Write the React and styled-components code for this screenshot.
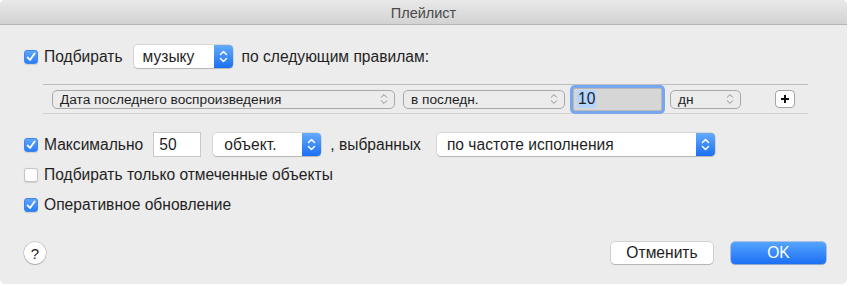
import React from "react";
import styled, { createGlobalStyle } from "styled-components";

const Global = createGlobalStyle`
  html, body { margin: 0; padding: 0; background: #ffffff; }
  body { font-family: "Liberation Sans", Arial, sans-serif; }
  * { box-sizing: border-box; }
`;

const Window = styled.div`
  width: 847px;
  height: 284px;
  background: #ececec;
  border-radius: 5px;
  overflow: hidden;
  display: flex;
  flex-direction: column;
  color: #1f1f1f;
`;

const TitleBar = styled.div`
  height: 25px;
  flex: none;
  display: flex;
  align-items: center;
  justify-content: center;
  background: linear-gradient(#e9e9e9, #d2d2d2);
  border-bottom: 1px solid #b4b4b4;
  font-size: 14.5px;
  color: #4a4a4a;
  padding-top: 1px;
`;

const Body = styled.div`
  flex: 1;
  display: flex;
  flex-direction: column;
  padding: 20px 0 0 24px;
`;

const Row = styled.div`
  display: flex;
  align-items: center;
  height: ${(p) => p.h || 23}px;
  margin-top: ${(p) => p.mt || 0}px;
  font-size: 15.6px;
`;

const Label = styled.span`
  margin-left: ${(p) => p.ml || 0}px;
  white-space: nowrap;
`;

const Box = styled.span`
  width: 14px;
  height: 14px;
  border-radius: 3px;
  flex: none;
  display: inline-flex;
  align-items: center;
  justify-content: center;
  background: ${(p) => (p.on ? "linear-gradient(#5fa6fb, #2a7ef6)" : "#ffffff")};
  border: 1px solid ${(p) => (p.on ? "#3c86ec" : "#c4c4c4")};
  box-shadow: 0 0.5px 1px rgba(0,0,0,0.12);
`;

const Checkbox = ({ on }) => (
  <Box on={on ? 1 : 0}>
    {on && (
      <svg width="10" height="10" viewBox="0 0 10 10">
        <path d="M1.6 5.4 L4 8 L8.6 1.4" fill="none" stroke="#fff" strokeWidth="1.8" strokeLinecap="round" strokeLinejoin="round" />
      </svg>
    )}
  </Box>
);

const Popup = styled.div`
  width: ${(p) => p.w}px;
  height: 23px;
  margin-left: ${(p) => p.ml || 0}px;
  display: flex;
  background: #fff;
  border-radius: 4px;
  box-shadow: 0 0 0 0.5px rgba(0,0,0,0.18), 0 1px 1px rgba(0,0,0,0.15);
  overflow: hidden;
  flex: none;
`;

const PopupText = styled.div`
  flex: 1;
  display: flex;
  align-items: center;
  padding-left: ${(p) => p.pl || 10}px;
`;

const BlueStep = styled.div`
  width: 19px;
  background: linear-gradient(#64abfc, #1b6ff4);
  display: flex;
  align-items: center;
  justify-content: center;
`;

const Chevrons = ({ color = "#fff", w = 9, h = 13, sw = 1.5 }) => (
  <svg width={w} height={h} viewBox="0 0 9 13">
    <path d="M1.5 4.5 L4.5 1.5 L7.5 4.5 M1.5 8.5 L4.5 11.5 L7.5 8.5" fill="none" stroke={color} strokeWidth={sw} strokeLinecap="round" strokeLinejoin="round" />
  </svg>
);

const BigPopup = ({ w, ml, children, pl }) => (
  <Popup w={w} ml={ml}>
    <PopupText pl={pl}>{children}</PopupText>
    <BlueStep>
      <Chevrons />
    </BlueStep>
  </Popup>
);

const RuleBox = styled.div`
  margin-top: 16px;
  margin-left: 19px;
  width: 765px;
  height: 30px;
  border-top: 1px solid #bdbdbd;
  border-bottom: 1px solid #d2d2d2;
  display: flex;
  align-items: center;
  padding-left: 9px;
`;

const SmallPopup = styled.div`
  width: ${(p) => p.w}px;
  height: 19px;
  margin-left: ${(p) => p.ml || 0}px;
  border: 1px solid #a8a8a8;
  border-radius: 5px;
  background: #ececec;
  display: flex;
  align-items: center;
  justify-content: space-between;
  padding: 0 6px 0 7px;
  flex: none;
  font-size: 13.7px;
`;

const FocusField = styled.div`
  width: 89px;
  height: 23px;
  margin-left: 8px;
  background: #d6d6d6;
  border: 1px solid #b8b8b8;
  box-shadow: 0 0 0 3px #78a6ef;
  border-radius: 2px;
  display: flex;
  align-items: center;
  padding-left: 3px;
  font-size: 15.6px;
  flex: none;
`;

const Selected = styled.span`
  background: #b4d5fe;
  padding: 0 1px;
`;

const PlusButton = styled.div`
  width: 20px;
  height: 18px;
  margin-left: 34px;
  background: #fff;
  border: 1px solid #a5a5a5;
  border-radius: 4px;
  display: flex;
  align-items: center;
  justify-content: center;
  flex: none;
`;

const NumField = styled.div`
  width: 48px;
  height: 25px;
  margin-left: 10px;
  background: #fff;
  border: 1px solid #c9c9c9;
  display: flex;
  align-items: center;
  padding-left: 5px;
  flex: none;
`;

const Footer = styled.div`
  margin-top: auto;
  margin-bottom: 20px;
  display: flex;
  align-items: center;
`;

const HelpButton = styled.div`
  width: 22px;
  height: 22px;
  border-radius: 50%;
  background: #fff;
  box-shadow: 0 0 0 0.5px rgba(0,0,0,0.25), 0 1px 1px rgba(0,0,0,0.15);
  display: flex;
  align-items: center;
  justify-content: center;
  font-size: 15px;
  color: #222;
`;

const Button = styled.div`
  width: ${(p) => p.w}px;
  height: 22px;
  margin-left: ${(p) => p.ml || 0}px;
  border-radius: 4px;
  display: flex;
  align-items: center;
  justify-content: center;
  font-size: 15.6px;
  background: ${(p) => (p.primary ? "linear-gradient(#55a4fd, #1c70f5)" : "#fff")};
  color: ${(p) => (p.primary ? "#fff" : "#222")};
  box-shadow: ${(p) =>
    p.primary
      ? "0 0 0 0.5px rgba(20,90,220,0.6), 0 1px 1px rgba(0,0,0,0.15)"
      : "0 0 0 0.5px rgba(0,0,0,0.22), 0 1px 1px rgba(0,0,0,0.15)"};
`;

const chev = { color: "#8a8a8a", w: 8, h: 12, sw: 1.1 };

export default function App() {
  return (
    <>
      <Global />
      <Window>
        <TitleBar>Плейлист</TitleBar>
        <Body>
          <Row>
            <Checkbox on />
            <Label ml={6}>Подбирать</Label>
            <BigPopup w={99} ml={11} pl={9}>музыку</BigPopup>
            <Label ml={9}>по следующим правилам:</Label>
          </Row>
          <RuleBox>
            <SmallPopup w={343}>
              <span>Дата последнего воспроизведения</span>
              <Chevrons {...chev} />
            </SmallPopup>
            <SmallPopup w={162} ml={8}>
              <span>в последн.</span>
              <Chevrons {...chev} />
            </SmallPopup>
            <FocusField>
              <Selected>10</Selected>
            </FocusField>
            <SmallPopup w={71} ml={8}>
              <span>дн</span>
              <Chevrons {...chev} />
            </SmallPopup>
            <PlusButton>
              <svg width="10" height="10" viewBox="0 0 10 10">
                <path d="M5 1 V9 M1 5 H9" stroke="#111" strokeWidth="2" />
              </svg>
            </PlusButton>
          </RuleBox>
          <Row mt={18} h={25}>
            <Checkbox on />
            <Label ml={6}>Максимально</Label>
            <NumField>50</NumField>
            <BigPopup w={108} ml={12} pl={11}>объект.</BigPopup>
            <Label ml={9}>, выбранных</Label>
            <BigPopup w={278} ml={16} pl={10}>по частоте исполнения</BigPopup>
          </Row>
          <Row mt={6} h={24}>
            <Checkbox />
            <Label ml={6}>Подбирать только отмеченные объекты</Label>
          </Row>
          <Row mt={6} h={24}>
            <Checkbox on />
            <Label ml={6}>Оперативное обновление</Label>
          </Row>
          <Footer>
            <HelpButton>?</HelpButton>
            <Button w={102} ml={565}>Отменить</Button>
            <Button w={95} ml={18} primary>OK</Button>
          </Footer>
        </Body>
      </Window>
    </>
  );
}
